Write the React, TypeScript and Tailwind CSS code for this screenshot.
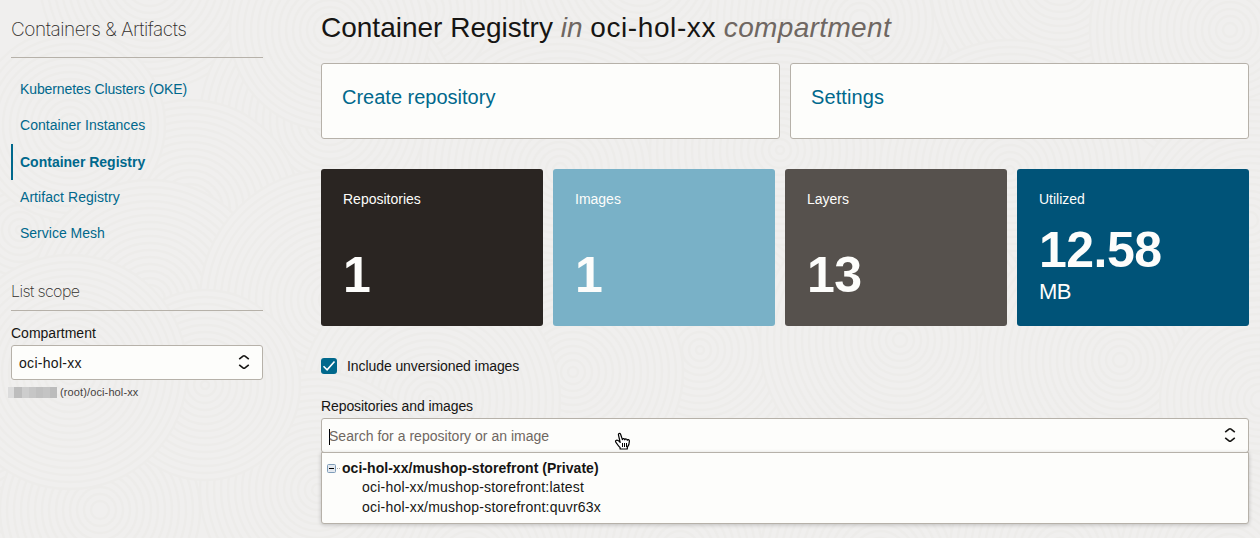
import React from "react";

const ripples: [number, number, number][] = [
  [150, -20, 110], [420, 10, 150], [640, -30, 120], [860, 20, 150], [1060, -20, 130], [1230, 30, 140],
  [20, 230, 130], [330, 120, 130], [560, 170, 140], [780, 150, 130], [1010, 170, 130], [1250, 220, 120],
  [190, 210, 110], [70, 125, 95], [330, 30, 100], [150, 300, 120], [330, 300, 130],
  [700, 350, 130], [900, 340, 140], [1120, 360, 140], [1260, 400, 100],
  [573, 372, 110], [430, 400, 130], [20, 510, 120], [100, 510, 100], [470, 560, 120], [680, 550, 110], [880, 560, 120],
  [1060, 550, 110], [1230, 560, 110], [318, 490, 118], [205, 385, 95], [70, 372, 117],
];

function Texture() {
  return (
    <svg className="pointer-events-none absolute inset-0" width="1260" height="538" aria-hidden="true">
      {ripples.map(([x, y, r], i) => (
        <g key={i} fill="none" stroke="#edecea" strokeWidth="2.4">
          <circle cx={x} cy={y} r={r} fill="#f0efee" />
          {Array.from({ length: Math.floor((r - 4) / 7) }, (_, n) => (
            <circle key={n} cx={x} cy={y} r={r - (n + 1) * 7} />
          ))}
        </g>
      ))}
    </svg>
  );
}

function Chevrons() {
  return (
    <svg className="mb-px" width="12" height="16" viewBox="0 0 12 16" fill="none" stroke="#161513" strokeWidth="1.6">
      <path d="M1.2 5.2 5 2.1q1-.8 2 0l3.8 3.1M1.2 10.8 5 13.9q1 .8 2 0l3.8-3.1" />
    </svg>
  );
}

function NavItem({ label, active }: { label: string; active?: boolean }) {
  return (
    <a
      className={
        active
          ? "flex h-9 items-center border-l-2 border-[#00688c] pl-[7px] font-bold"
          : "flex h-9 items-center pb-[2px] pl-[9px]"
      }
    >
      {label}
    </a>
  );
}

function Tile({ label, value, unit, color }: { label: string; value: string; unit?: string; color: string }) {
  return (
    <div className={`h-[157px] rounded-[3px] pl-[22px] pt-[20px] text-[#fdfdfb] ${color}`}>
      <div className="leading-5">{label}</div>
      <div
        className={
          unit
            ? "mt-[15px] text-[50px] font-bold leading-[52px] tracking-[-0.5px]"
            : "mt-10 text-[50px] font-bold leading-[52px] tracking-[-0.5px]"
        }
      >
        {value}
      </div>
      {unit && <div className="mt-[3px] text-[22px] leading-[26px] tracking-[-0.5px]">{unit}</div>}
    </div>
  );
}

export default function App() {
  return (
    <div className="relative h-[538px] w-[1260px] overflow-hidden bg-[#f0efee] font-['Liberation_Sans',sans-serif] text-[14px] text-[#161513]">
      <Texture />
      <div className="relative flex">
        <aside className="ml-[11px] w-[252px]">
          <h2 className="h-[58px] border-b border-[#b6b1a9] pt-4 font-['Inter',sans-serif] text-[19px] font-extralight leading-7 tracking-[-0.47px] text-[#302d2a]">
            Containers &amp; Artifacts
          </h2>
          <nav className="mt-[14px] flex flex-col text-[#00688c]">
            <div className="tracking-[-0.1px]"><NavItem label="Kubernetes Clusters (OKE)" /></div>
            <div className="tracking-[0.04px]"><NavItem label="Container Instances" /></div>
            <div className="tracking-normal"><NavItem label="Container Registry" active /></div>
            <div className="tracking-[0.06px]"><NavItem label="Artifact Registry" /></div>
            <div className="tracking-normal"><NavItem label="Service Mesh" /></div>
          </nav>
          <h3 className="mt-[28px] h-[31px] border-b border-[#b6b1a9] font-['Inter',sans-serif] text-[16px] font-extralight leading-[22px] tracking-[-0.6px] text-[#302d2a]">
            List scope
          </h3>
          <div className="mt-[12px] leading-5">Compartment</div>
          <div className="mt-[2px] flex h-[35px] items-center justify-between rounded-[3px] border border-[#b6b1a9] bg-[#fdfdfb] pl-[7px] pr-3">
            <span className="pt-[2px] tracking-[0.3px]">oci-hol-xx</span>
            <Chevrons />
          </div>
          <div className="-ml-[3px] mt-[5px] flex h-[15px] items-center text-[11px] tracking-[0.12px] text-[#45413e]">
            <span className="mr-[3px] flex h-[11px] w-[49px] overflow-hidden">
              <span className="w-[6px] bg-[#dcdcdc]" />
              <span className="w-[8px] bg-[#bdbdbd]" />
              <span className="w-[7px] bg-[#cdcdcd]" />
              <span className="w-[7px] bg-[#c6c6c6]" />
              <span className="w-[7px] bg-[#c0c0c0]" />
              <span className="w-[7px] bg-[#c4c4c4]" />
              <span className="w-[7px] bg-[#bcbcbc]" />
            </span>
            (root)/oci-hol-xx
          </div>
        </aside>

        <main className="ml-[58px] w-[928px]">
          <h1 className="mt-[12px] h-8 whitespace-nowrap text-[28px] leading-8">
            Container Registry <em className="text-[#6f6762]">in</em>{" "}
            <span className="tracking-[0.6px]">oci-hol-xx</span>{" "}
            <em className="tracking-[0.35px] text-[#6f6762]">compartment</em>
          </h1>
          <div className="mt-[19px] grid grid-cols-2 gap-[10px] text-[20px] text-[#00688c]">
            <a className="h-[76px] rounded-[3px] border border-[#b6b1a9] bg-[#fdfdfb] pl-5 pt-[21px] leading-6">Create repository</a>
            <a className="h-[76px] rounded-[3px] border border-[#b6b1a9] bg-[#fdfdfb] pl-5 pt-[21px] leading-6 tracking-[0.1px]">Settings</a>
          </div>
          <div className="mt-[30px] grid grid-cols-[222px_222px_222px_232px] gap-[10px]">
            <Tile label="Repositories" value="1" color="bg-[#2a2522]" />
            <Tile label="Images" value="1" color="bg-[#79b1c7]" />
            <Tile label="Layers" value="13" color="bg-[#56514d]" />
            <Tile label="Utilized" value="12.58" unit="MB" color="bg-[#005378]" />
          </div>
          <label className="mt-8 flex h-4 items-center gap-[10px] tracking-[-0.08px]">
            <span className="flex size-4 items-center justify-center rounded-[3px] bg-[#00688c]">
              <svg width="14" height="12" viewBox="0 0 14 12" fill="none" stroke="#fff" strokeWidth="1.6">
                <path d="m1.5 6.3 3.6 3.5L12.5 1.5" />
              </svg>
            </span>
            Include unversioned images
          </label>
          <div className="mt-[22px] leading-5 tracking-[-0.09px]">Repositories and images</div>
          <div className="mt-[2px] flex h-[35px] items-center justify-between rounded-[3px] border border-[#b6b1a9] bg-[#fdfdfb] pl-[7px] pr-3">
            <span className="flex items-center pt-[2px] tracking-[0.02px] text-[#6f6762]">
              <span className="-mr-px h-4 w-px bg-black" />
              Search for a repository or an image
            </span>
            <Chevrons />
          </div>
          <div className="-mt-px h-[72px] rounded-b-[3px] border border-[#b6b1a9] bg-[#fdfdfb] pl-[5px] pt-[5px] shadow-[0_1px_4px_rgba(0,0,0,0.2)]">
            <div className="flex h-5 items-center font-bold tracking-[0.04px]">
              <svg className="mr-px" width="14" height="9" viewBox="0 0 14 9">
                <rect x=".5" y=".5" width="8" height="8" rx="1" fill="#e4e9ef" stroke="#7f9db9" />
                <path d="M2 4.5h5" stroke="#000" />
                <path d="M10 4.5h1M12 4.5h1" stroke="#aaa" />
              </svg>
              oci-hol-xx/mushop-storefront (Private)
            </div>
            <div className="h-[19px] pl-[35px] leading-[19px] tracking-[0.21px]">oci-hol-xx/mushop-storefront:latest</div>
            <div className="h-5 pl-[35px] leading-5 tracking-[0.22px]">oci-hol-xx/mushop-storefront:quvr63x</div>
          </div>
        </main>
      </div>
      <svg className="absolute left-[614px] top-[432px]" width="17" height="19" viewBox="0 0 17 19">
        <path
          d="M6.2 10.5C5.2 9.2 3.4 7.6 2 8.4c-1.3.9.2 2.2 1.1 3.6.9 1.4 1.6 2.3 3 3.6V17h7.2v-1.7c1.5-1.8 2.1-3 2.1-6.3 0-1.6-1.8-1.9-2.2-.7-.1-1.5-1.9-1.8-2.4-.5-.2-1.3-1.9-1.6-2.4-.2L6.7 2.5C6 .8 4 1.3 4.5 3.1z"
          fill="#fff"
          stroke="#000"
          strokeWidth="1.2"
          strokeLinejoin="round"
        />
        <path d="M8.5 11v4M10.5 11v4M12.5 11v4" stroke="#000" />
      </svg>
    </div>
  );
}
